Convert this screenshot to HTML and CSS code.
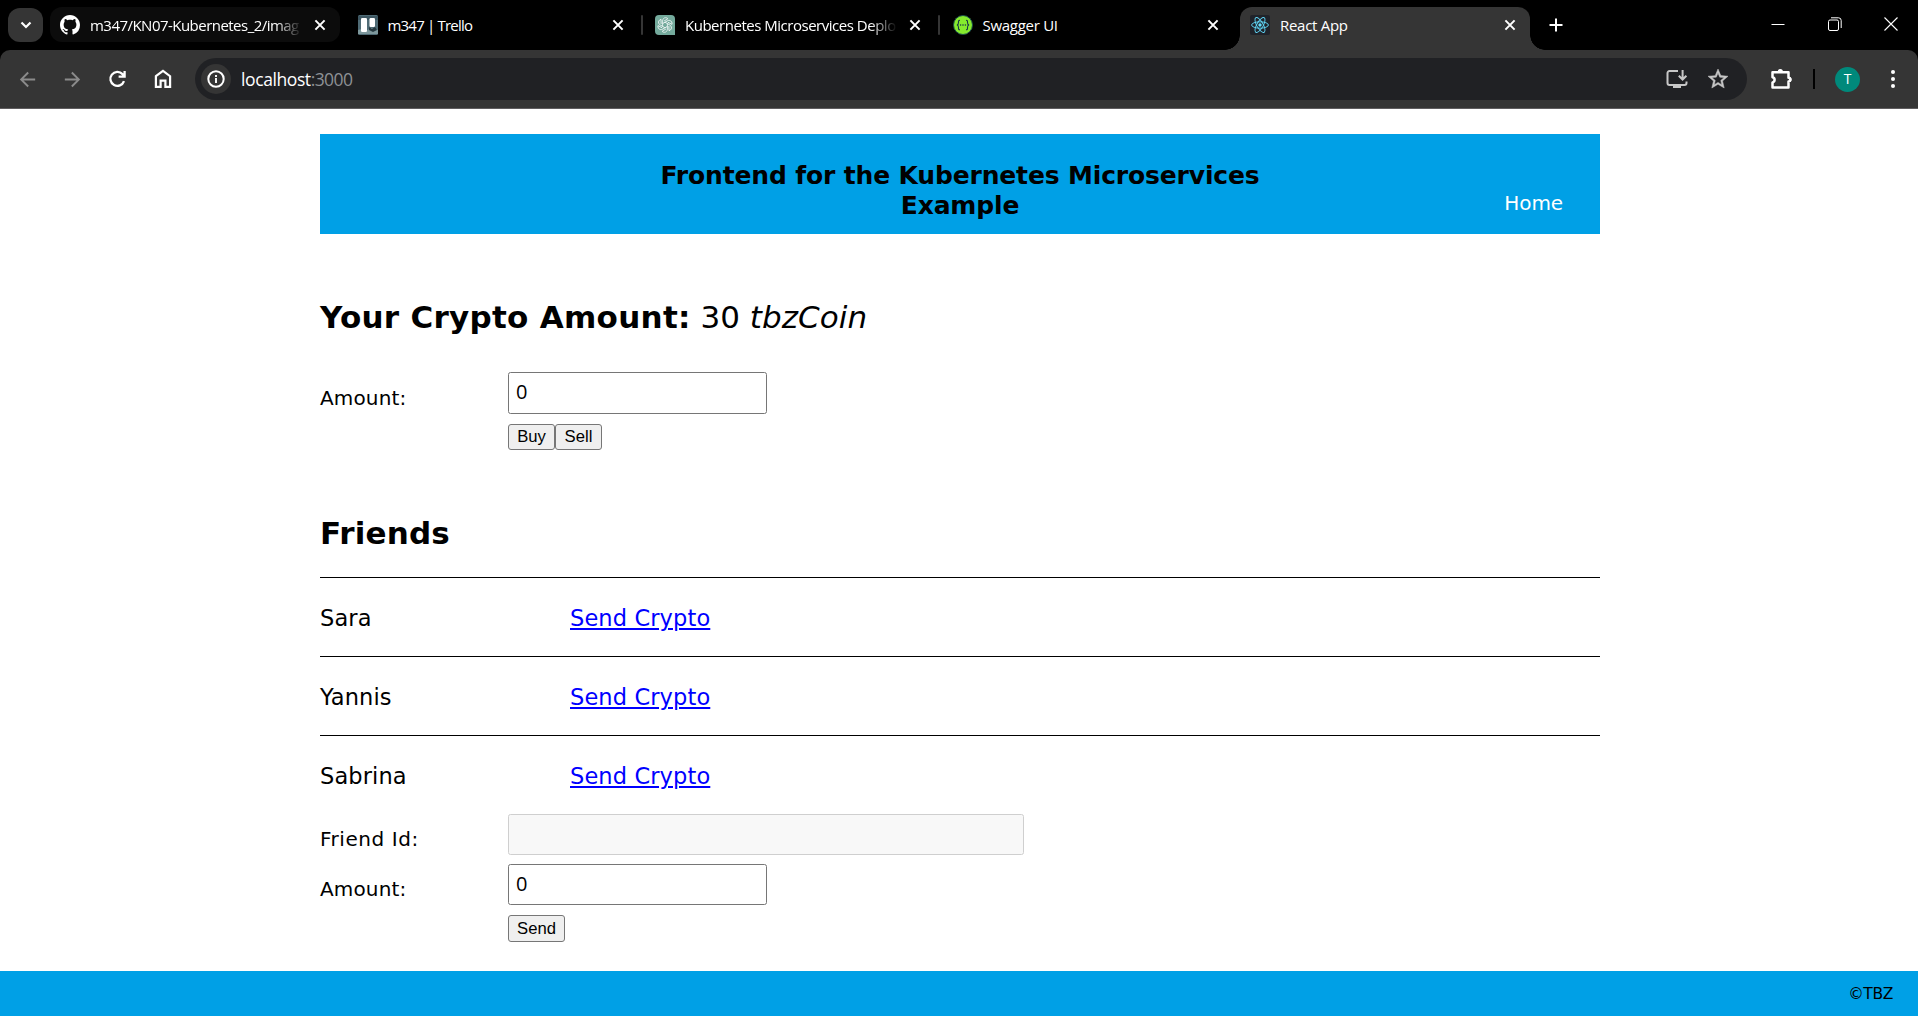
FILE: index.html
```
<!DOCTYPE html>
<html lang="en">
<head>
<meta charset="utf-8">
<title>React App</title>
<link rel="stylesheet" href="styles.css">
</head>
<body>
<svg class="defs" aria-hidden="true">
  <symbol id="close" viewBox="0 0 12 12"><path d="M1.4 1.4l9.2 9.2M10.6 1.4l-9.2 9.2" fill="none" stroke="#fff" stroke-width="2"/></symbol>
</svg>
<div class="tabstrip">
  <button class="tab-search" aria-label="Search tabs"><svg width="12" height="8" viewBox="0 0 12 8"><path d="M1.5 1.5L6 6l4.500-4.500" fill="none" stroke="#fff" stroke-width="2.200"/></svg></button>
  <div class="tabs">
    <div class="tab tab-hover">
      <svg class="favicon" viewBox="0 0 16 16"><path fill="#fff" d="M8 0C3.580 0 0 3.580 0 8c0 3.540 2.290 6.530 5.470 7.590.4.070.55-.17.55-.38 0-.19-.01-.82-.01-1.490-2.010.37-2.530-.49-2.690-.94-.09-.23-.48-.94-.82-1.130-.28-.15-.68-.52-.01-.53.63-.01 1.080.58 1.230.82.72 1.210 1.870.87 2.330.66.07-.52.28-.87.51-1.070-1.780-.2-3.640-.89-3.640-3.950 0-.87.31-1.590.82-2.150-.08-.2-.36-1.020.08-2.120 0 0 .67-.21 2.200.82.64-.18 1.320-.27 2-.27s1.360.09 2 .27c1.530-1.040 2.200-.82 2.200-.82.44 1.100.16 1.920.08 2.120.51.56.82 1.270.82 2.150 0 3.070-1.870 3.750-3.650 3.950.29.25.54.73.54 1.480 0 1.070-.01 1.930-.01 2.200 0 .21.15.46.55.38A8.010 8.010 0 0 0 16 8c0-4.420-3.580-8-8-8z"/></svg>
      <span class="tab-title fade repo">m347/KN07-Kubernetes_2/imag</span>
      <svg class="tab-close"><use href="#close"/></svg>
    </div>
    <div class="tab divided">
      <svg class="favicon" viewBox="0 0 20 20">
        <rect width="20" height="20" rx="1.500" fill="#4f6b75"/>
        <path d="M0 1h20v4H0z" fill="#3d5661"/><path d="M0 15l4-1 4 2 5-3 7 2v4H0z" fill="#7d979c"/><path d="M11 12l3 2 3-2 2 3-4 2-4-2z" fill="#25383f"/>
        <rect x="3" y="3" width="6" height="14" rx="1.200" fill="#fff"/><rect x="11.500" y="3" width="5.500" height="9" rx="1.200" fill="#fff"/>
      </svg>
      <span class="tab-title trello">m347 | Trello</span>
      <svg class="tab-close"><use href="#close"/></svg>
    </div>
    <div class="tab divided">
      <svg class="favicon" viewBox="0 0 20 20">
        <path d="M4 0h12a4 4 0 0 1 4 4v16H4a4 4 0 0 1-4-4V4a4 4 0 0 1 4-4z" fill="#74aa9c"/>
        <g fill="none" stroke="#eef6f4" stroke-width=".85">
          <path id="petal" d="M7.600 11.300V6c0-2 1.300-3.300 3-3.300 1 0 1.700.3 2.300 1L9 6.100"/>
          <use href="#petal" transform="rotate(60 10 10)"/><use href="#petal" transform="rotate(120 10 10)"/><use href="#petal" transform="rotate(180 10 10)"/><use href="#petal" transform="rotate(240 10 10)"/><use href="#petal" transform="rotate(300 10 10)"/>
        </g>
      </svg>
      <span class="tab-title fade gpt">Kubernetes Microservices Deplo</span>
      <svg class="tab-close"><use href="#close"/></svg>
    </div>
    <div class="tab">
      <svg class="favicon" viewBox="0 0 20 20">
        <circle cx="10" cy="10" r="9.500" fill="#85ea2d" stroke="#1c4f4a"/>
        <path d="M7 5.200C5.300 5.200 5.500 6.400 5.500 7.600 5.500 9 5.200 9.900 3.900 10c1.300.1 1.600 1 1.600 2.400 0 1.200-.2 2.400 1.500 2.400M13 5.200c1.700 0 1.500 1.200 1.500 2.400 0 1.400.3 2.300 1.600 2.400-1.300.1-1.600 1-1.600 2.400 0 1.200.2 2.400-1.500 2.400" fill="none" stroke="#173647" stroke-width="1.100"/>
        <circle cx="7.600" cy="10" r=".8" fill="#173647"/><circle cx="10" cy="10" r=".8" fill="#173647"/><circle cx="12.400" cy="10" r=".8" fill="#173647"/>
      </svg>
      <span class="tab-title swagger">Swagger UI</span>
      <svg class="tab-close"><use href="#close"/></svg>
    </div>
    <div class="tab tab-active">
      <svg class="favicon" viewBox="0 0 20 20">
        <rect width="20" height="20" rx="2" fill="#20232a"/>
        <g fill="none" stroke="#61dafb" stroke-width=".9"><ellipse cx="10" cy="10" rx="8.400" ry="3.200"/><ellipse cx="10" cy="10" rx="8.400" ry="3.200" transform="rotate(60 10 10)"/><ellipse cx="10" cy="10" rx="8.400" ry="3.200" transform="rotate(120 10 10)"/></g>
        <circle cx="10" cy="10" r="1.700" fill="#61dafb"/>
      </svg>
      <span class="tab-title react">React App</span>
      <svg class="tab-close"><use href="#close"/></svg>
    </div>
  </div>
  <svg class="new-tab" width="14" height="14" viewBox="0 0 14 14"><path d="M7 .5v13M.5 7h13" stroke="#fff" stroke-width="2"/></svg>
  <div class="window-controls">
    <svg width="14" height="14" viewBox="0 0 14 14"><path d="M.5 7.500h13" stroke="#fff"/></svg>
    <svg width="14" height="14" viewBox="0 0 14 14" fill="none" stroke="#fff"><rect x=".5" y="3" width="10" height="10.500" rx="1.500"/><path d="M3 .8h7.500a2.700 2.700 0 0 1 2.700 2.700V11" /></svg>
    <svg width="14" height="14" viewBox="0 0 14 14"><path d="M.5.5l13 13M13.500.5l-13 13" stroke="#fff" stroke-width="1.100"/></svg>
  </div>
</div>
<div class="toolbar-back">
<div class="toolbar">
  <div class="nav">
    <svg width="23" height="23" viewBox="0 0 24 24" fill="#8b8b8b"><path d="M20 11H7.830l5.590-5.590L12 4l-8 8 8 8 1.410-1.410L7.830 13H20v-2z"/></svg>
    <svg width="23" height="23" viewBox="0 0 24 24" fill="#8b8b8b"><path d="M12 4l-1.410 1.410L16.170 11H4v2h12.170l-5.580 5.590L12 20l8-8z"/></svg>
    <svg width="24" height="24" viewBox="0 0 24 24" fill="none" stroke="#fff" stroke-width="2.300"><path d="M19 14.200A7 7 0 1 1 17.500 7.100l1.800 1.900M19.600 4v5.700h-6"/></svg>
    <svg width="24" height="24" viewBox="0 0 24 24" fill="none" stroke="#fff" stroke-width="2.200"><path d="M4.900 9.200L12 3.800l7.100 5.400v10.700h-4.700v-6.300H9.600v6.300H4.900z"/></svg>
  </div>
  <div class="omnibox">
    <span class="site-info"><svg width="18" height="18" viewBox="0 0 18 18"><circle cx="9" cy="9" r="7.700" fill="none" stroke="#fff" stroke-width="2"/><path d="M9 8v5M9 5v1.900" stroke="#fff" stroke-width="1.900"/></svg></span>
    <span class="url">localhost<span class="port">:3000</span></span>
    <svg class="install" width="22" height="20" viewBox="0 0 22 20"><path d="M12 2H3.500A2 2 0 0 0 1.500 4v10a2 2 0 0 0 2 2h15a2 2 0 0 0 2-2v-1.500M16.600 1v9M12.800 6.700l3.800 3.800 3.800-3.800" fill="none" stroke="#c7c7c7" stroke-width="2"/><path d="M7 16h8v3H7z" fill="#c7c7c7"/></svg>
    <svg width="24" height="24" viewBox="0 0 24 24" fill="#c7c7c7" stroke="#c7c7c7" stroke-width=".5"><path d="M22 9.240l-7.190-.62L12 2 9.190 8.630 2 9.240l5.460 4.730L5.820 21 12 17.270 18.180 21l-1.630-7.030L22 9.240zM12 15.400l-3.760 2.270 1-4.280-3.320-2.880 4.380-.38L12 6.100l1.710 4.040 4.380.38-3.320 2.880 1 4.280L12 15.400z"/></svg>
  </div>
  <svg class="extensions" width="24" height="24" viewBox="0 0 24 24"><path d="M3.500 5.300h16v5.500a1.800 1.800 0 0 1 0 3.600v6h-16v-5a2.600 2.600 0 0 0 0-5.100z" fill="none" stroke="#fff" stroke-width="2.500" stroke-linejoin="round"/><path d="M8.700 4.600a2.600 2.600 0 0 1 5.200 0zM20 10a2.600 2.600 0 0 1 0 5.200z" fill="#fff"/></svg>
  <span class="separator"></span>
  <span class="avatar">T</span>
  <svg class="menu" width="6" height="20" viewBox="0 0 6 20" fill="#fff"><circle cx="3" cy="3" r="2"/><circle cx="3" cy="10" r="2"/><circle cx="3" cy="17" r="2"/></svg>
</div>
</div>
<div class="app">
  <div class="content">
    <header class="banner">
      <h1>Frontend for the Kubernetes Microservices Example</h1>
      <a class="home">Home</a>
    </header>
    <h2><span class="amount-title">Your Crypto Amount:</span> <span class="balance">30</span> <i>tbzCoin</i></h2>
    <form class="trade">
      <label>Amount:</label><input value="0" aria-label="Amount">
      <div class="buttons"><button type="button" class="buy">Buy</button><button type="button" class="buy">Sell</button></div>
    </form>
    <h2 class="friends-title">Friends</h2>
    <div class="friends">
      <div class="friend"><span>Sara</span><a href="#">Send Crypto</a></div>
      <div class="friend"><span>Yannis</span><a href="#">Send Crypto</a></div>
      <div class="friend"><span>Sabrina</span><a href="#">Send Crypto</a></div>
    </div>
    <form class="send">
      <label class="friend-id">Friend Id:</label><input class="wide" disabled aria-label="Friend Id">
      <label>Amount:</label><input value="0" aria-label="Amount to send">
      <div class="buttons"><button type="button" class="submit">Send</button></div>
    </form>
  </div>
  <footer>©TBZ</footer>
</div>
</body>
</html>
```
FILE: styles.css
```
* { box-sizing: border-box; }
body {
  margin: 0;
  height: 100vh;
  display: flex;
  flex-direction: column;
  overflow: hidden;
  background: #fff;
  color: #000;
  font-family: Verdana, "DejaVu Sans", sans-serif;
}
svg { display: block; flex: none; }
.defs { position: absolute; width: 0; height: 0; }

/* Tab strip */
.tabstrip {
  display: flex;
  height: 50px;
  padding: 7px 20px 0 8px;
  background: #000;
  color: #fff;
  font-family: "Segoe UI", "Open Sans", sans-serif;
}
.tab-search {
  display: flex;
  align-items: center;
  justify-content: center;
  width: 35px;
  height: 34px;
  margin: 1px 7px 0 0;
  padding: 0;
  border: 0;
  border-radius: 12px;
  background: #353535;
}
.tabs { display: flex; gap: 7.5px; }
.tab {
  position: relative;
  display: flex;
  align-items: center;
  width: 290px;
  height: 35px;
  padding: 0 14px 0 10px;
  border-radius: 12px;
}
.tab-hover { background: #0c0c0c; }
.tab-active {
  height: 43px;
  padding-bottom: 8px;
  border-radius: 12px 12px 0 0;
  background: #353535;
}
.tab-active::before,
.tab-active::after {
  content: "";
  position: absolute;
  bottom: 0;
  width: 15px;
  height: 15px;
}
.tab-active::before { right: 100%; background: radial-gradient(circle at 0 0, transparent 14.500px, #353535 15px); }
.tab-active::after { left: 100%; background: radial-gradient(circle at 100% 0, transparent 14.500px, #353535 15px); }
.divided::after {
  content: "";
  position: absolute;
  left: 293px;
  top: 8px;
  width: 2px;
  height: 20px;
  border-radius: 1px;
  background: #353535;
}
.favicon { width: 20px; height: 20px; margin-right: 10px; }
.tab-title {
  flex: 1;
  white-space: nowrap;
  font-size: 15px;
  line-height: 24px;
}
.fade { -webkit-mask-image: linear-gradient(to right, #000 185px, transparent 212px); mask-image: linear-gradient(to right, #000 185px, transparent 212px); }
.repo { letter-spacing: -.53px; }
.trello { letter-spacing: -.8px; }
.gpt { letter-spacing: -.48px; }
.swagger, .react { letter-spacing: -.28px; }
.tab-close { width: 12px; height: 12px; margin-left: 12px; }
.new-tab { margin: 11px 0 0 18.500px; }
.window-controls { display: flex; gap: 42.500px; margin: 10px 0 0 auto; }

/* Toolbar */
.toolbar-back { background: #000; }
.toolbar {
  display: flex;
  align-items: center;
  height: 59px;
  padding: 0 22px 0 16px;
  border-bottom: 1px solid #5f5d5f;
  border-radius: 10px 10px 0 0;
  background: #353535;
  font-family: "Segoe UI", "Open Sans", sans-serif;
}
.nav { display: flex; align-items: center; gap: 21.500px; width: 179px; }
.omnibox {
  display: flex;
  align-items: center;
  width: 1552px;
  height: 42px;
  padding: 0 17px 0 6px;
  border-radius: 21px;
  background: #202124;
}
.site-info {
  display: flex;
  align-items: center;
  justify-content: center;
  width: 30px;
  height: 30px;
  border-radius: 50%;
  background: #353535;
}
.url {
  margin-left: 10px;
  color: #fff;
  font-size: 17.500px;
  line-height: 24px;
  letter-spacing: -.4px;
}
.port { color: #8d9094; letter-spacing: -.6px; }
.install { margin: 0 18px 0 auto; }
.extensions { margin-left: 22px; }
.separator { width: 2px; height: 20px; margin-left: 20px; background: #000; }
.avatar {
  width: 25px;
  height: 25px;
  margin-left: 20px;
  border-radius: 50%;
  background: #00897b;
  color: #fff;
  font-size: 14px;
  line-height: 24px;
  text-align: center;
}
.menu { margin-left: auto; }

/* Application */
.app { flex: 1; display: flex; flex-direction: column; }
.content { width: 1280px; margin: 25px 0 0 320px; }
.banner {
  display: grid;
  grid-template-columns: 320px 640px 320px;
  height: 100px;
  padding-top: 26px;
  background: #00a0e6;
}
h1 {
  grid-column: 2;
  margin: 1px 0 0;
  font-size: 25px;
  line-height: 30px;
  letter-spacing: -.15px;
  text-align: center;
}
.home {
  margin: 28px 37px 0 0;
  color: #fff;
  font-size: 20px;
  line-height: 30px;
  letter-spacing: -.1px;
  text-align: right;
}
h2 {
  margin: 64px 0 0;
  font-size: 31px;
  line-height: 38px;
  font-weight: normal;
}
.amount-title, .friends-title { font-weight: bold; }
.amount-title { letter-spacing: .28px; }
.balance { letter-spacing: -.1px; }
h2 i { letter-spacing: .1px; }
.trade, .send {
  display: grid;
  grid-template-columns: 188px 1fr;
  align-items: start;
  font-size: 20px;
}
.trade { margin-top: 36px; grid-template-rows: 52px 26px; }
.send { grid-template-rows: 50px 50px 28px; }
label { letter-spacing: .15px; }
.trade label { line-height: 52px; }
.send label { line-height: 50px; }
label.friend-id { letter-spacing: .55px; }
input {
  width: 259px;
  height: 41px;
  margin: 0;
  padding: 0 7px 3px;
  border: 1px solid #767676;
  border-radius: 2.500px;
  background: #fff;
  color: #000;
  font: 20px "Segoe UI", "Open Sans", sans-serif;
}
.trade input { height: 42px; }
input.wide { width: 516px; }
input:disabled { background: #f8f8f8; border-color: #cfcfcf; }
.buttons { grid-column: 2; display: flex; }
button.buy, button.submit {
  width: 47px;
  height: 26px;
  padding: 0;
  border: 1px solid #767676;
  border-radius: 3px;
  background: #efefef;
  color: #000;
  font: 16.670px/22px Arial, "Liberation Sans", sans-serif;
}
button.submit { width: 57px; height: 27px; margin-top: 1px; }
.friends-title { margin-top: 64px; letter-spacing: .15px; }
.friends { margin-top: 25px; }
.friend {
  display: grid;
  grid-template-columns: 250px auto;
  justify-content: start;
  height: 79px;
  padding-top: 2px;
  border-top: 1px solid #000;
  font-size: 22.500px;
  line-height: 76px;
  letter-spacing: .12px;
}
.friend a { color: #00f; text-decoration-thickness: 2px; text-underline-offset: 2px; }
footer {
  height: 45px;
  margin-top: auto;
  padding-right: 25px;
  background: #00a0e6;
  font-size: 15.500px;
  line-height: 46px;
  letter-spacing: -.35px;
  text-align: right;
}
```
